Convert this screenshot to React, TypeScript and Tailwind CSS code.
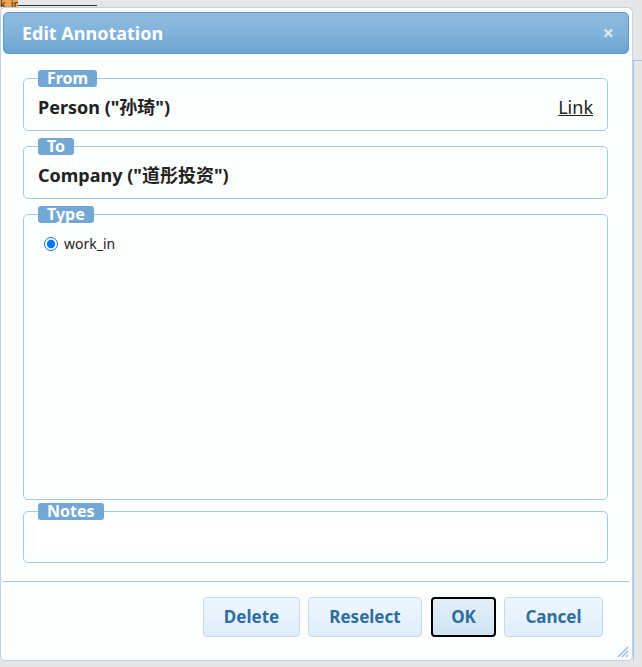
import React from 'react';

const font = { fontFamily: '"Noto Sans", "Noto Sans CJK SC", sans-serif' };

type BoxProps = {
  legend: string;
  className?: string;
  children?: React.ReactNode;
};

const Box: React.FC<BoxProps> = ({ legend, className, children }) => (
  <fieldset className={'mx-[20px] rounded-[5px] border border-[#a6c9e2] px-[14px] ' + (className || '')}>
    <legend className="rounded-[3px] bg-[#72a8d3] px-[9px] text-[16px] leading-[17px] font-bold text-white">
      {legend}
    </legend>
    {children}
  </fieldset>
);

const Button: React.FC<{ label: string; active?: boolean; className?: string }> = ({ label, active, className }) => (
  <button
    className={
      'h-[40px] rounded-[4px] text-[17px] font-bold text-[#2e6e9e] ' +
      (active
        ? 'border-2 border-black bg-gradient-to-b from-[#e4f0fa] to-[#cfe3f4] '
        : 'border border-[#c5dbec] bg-gradient-to-b from-[#eef6fe] to-[#dfeefb] ') +
      (className || '')
    }
  >
    {label}
  </button>
);

export default function App() {
  return (
    <div className="h-[667px] w-[642px] overflow-hidden bg-[#e6e6e6]" style={font}>
      {/* bits of the page behind the dialog */}
      <div className="flex h-[7px] items-end">
        <div className="h-[7px] w-[18px] overflow-hidden bg-[#f0a24c] text-[11px] leading-[7px] text-[#333]">k_in</div>
        <div className="mb-[1px] h-[1px] w-[79px] bg-[#333]" />
      </div>

      <div className="flex">
        <div className="flex h-[654px] w-[633px] flex-col rounded-[5px] border border-[#b9d3ea] bg-[#fcfdfd] pt-[4px] pr-[3px] pl-[2px]">
          {/* title bar */}
          <div className="flex h-[42px] shrink-0 items-center justify-between rounded-[5px] border border-[#5b9bd2] bg-gradient-to-b from-[#8dbbdf] via-[#82b3da] to-[#6aa3d0] pl-[18px] pr-[14px]">
            <span className="text-[18px] font-bold text-white">Edit Annotation</span>
            <span className="text-[20px] leading-none font-bold text-[#dce9f5]">×</span>
          </div>

          <div className="mt-[16px] flex flex-col gap-[7px] pr-[1px]">
            <Box legend="From" className="pb-[11px]">
              <div className="mt-[8px] flex h-[24px] items-center justify-between text-[18px] text-[#222]">
                <span className="font-bold">Person ("孙琦")</span>
                <span className="underline">Link</span>
              </div>
            </Box>

            <Box legend="To" className="pb-[11px]">
              <div className="mt-[8px] flex h-[24px] items-center text-[18px] font-bold text-[#222]">
                Company ("道彤投资")
              </div>
            </Box>

            <Box legend="Type">
              <div className="h-[276px] pt-[10px]">
                <label className="flex items-center text-[14px] text-[#222]">
                  <input type="radio" defaultChecked className="ml-[6px] mr-[6px] h-[14px] w-[14px] accent-[#0075ff]" />
                  work_in
                </label>
              </div>
            </Box>

            <Box legend="Notes" className="-mt-[4px] pb-[10px]">
              <div className="mt-[6px] h-[26px] bg-white" />
            </Box>
          </div>

          <div className="mt-[18px] h-[1px] bg-[#a6c9e2]" />

          <div className="mt-[15px] flex justify-end gap-[8px] pr-[26px]">
            <Button label="Delete" className="w-[97px]" />
            <Button label="Reselect" className="w-[114px]" />
            <Button label="OK" active className="ml-[1px] w-[65px]" />
            <Button label="Cancel" className="w-[99px]" />
          </div>

          <div className="mt-auto flex justify-end pb-[2px]">
            <svg width="13" height="13" viewBox="0 0 13 13">
              <path d="M12 2 L2 12 M12 6 L6 12 M12 10 L10 12" stroke="#8fb6d8" strokeWidth="1.2" />
            </svg>
          </div>
        </div>
        <div className="mt-[53px] h-[601px] flex-1 border-t border-l border-[#a9c6e8] bg-[#e6e6e6]" />
      </div>
    </div>
  );
}
